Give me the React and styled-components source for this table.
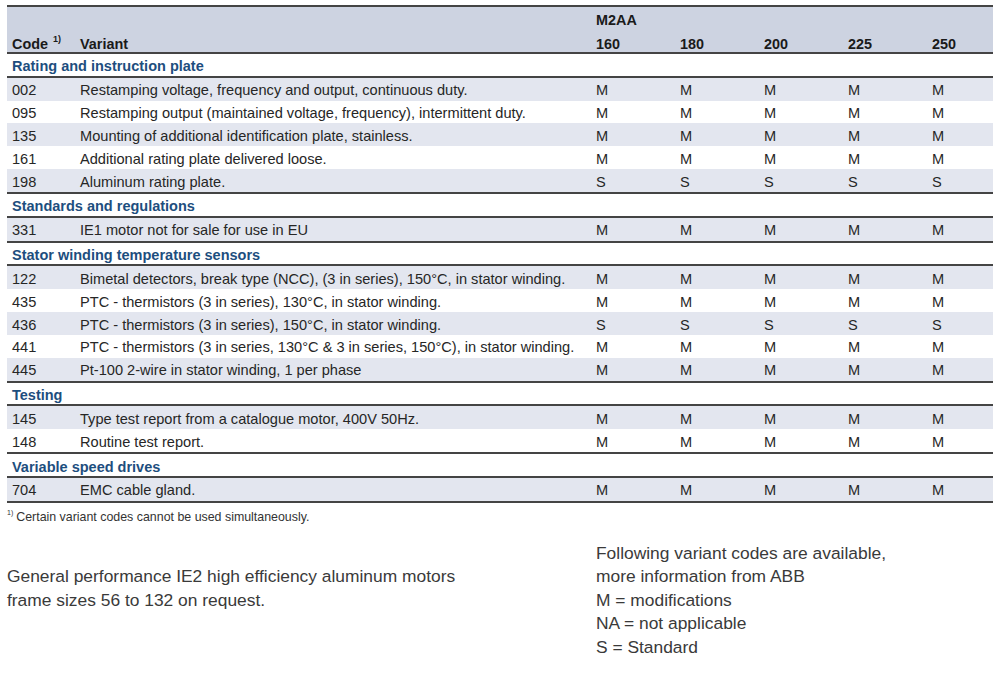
import React from "react";
import styled, { createGlobalStyle } from "styled-components";

const Global = createGlobalStyle`
  *, *::before, *::after { box-sizing: border-box; }
  html, body { margin: 0; padding: 0; background: #fff; }
  body { font-family: "Liberation Sans", Arial, Helvetica, sans-serif; color: #1e1e1e; }
`;

const Page = styled.div`
  width: 1000px;
  height: 679px;
  padding: 5px 7px 0 7px;
  overflow: hidden;
`;

const Table = styled.div`
  width: 986px;
  border-top: 2px solid #444;
`;

const COLS = "73px 516px 84px 84px 84px 84px 1fr";

const HeadBlock = styled.div`
  background: #cdd3e1;
  border-bottom: 2px solid #444;
  height: 47px;
  display: grid;
  grid-template-columns: ${COLS};
  grid-template-rows: 22px 23px;
  font-weight: bold;
  font-size: 14.4px;
  color: #1a1a1a;
`;

const HeadCell = styled.div`
  display: flex;
  align-items: ${(p) => (p.$row === 2 ? "flex-end" : "center")};
  padding-left: ${(p) => (p.$first ? "5px" : "0")};
  grid-column: ${(p) => p.$col || "auto"};
  grid-row: ${(p) => p.$row || "auto"};
  padding-top: ${(p) => (p.$row === 1 ? "3px" : "0")};
`;

const Sup = styled.span`
  font-size: 9px;
  font-weight: bold;
  margin-left: 5px;
  align-self: flex-start;
  margin-top: 5px;
`;

const SectionTitle = styled.div`
  height: 23.8px;
  display: flex;
  align-items: center;
  padding-left: 5px;
  padding-top: 3px;
  font-size: 14.5px;
  font-weight: bold;
  color: #1d4e7e;
  border-bottom: 2px solid #444;
`;

const Rows = styled.div`
  border-bottom: 2px solid #444;
`;

const Row = styled.div`
  display: grid;
  grid-template-columns: ${COLS};
  height: 22.85px;
  padding-top: 2px;
  align-items: center;
  background: ${(p) => (p.$shade ? "#e3e6ef" : "#fff")};
  font-size: 14.6px;
  color: #262626;
`;

const Cell = styled.div`
  padding-left: ${(p) => (p.$first ? "5px" : "0")};
  white-space: nowrap;
`;

const Footnote = styled.div`
  font-size: 12.4px;
  color: #333;
  margin-top: 7px;
  display: flex;
  align-items: flex-start;
`;

const FootSup = styled.span`
  font-size: 7px;
  margin-right: 3px;
  position: relative;
  top: -1px;
`;

const Bottom = styled.div`
  display: grid;
  grid-template-columns: 589px 1fr;
  margin-top: 18px;
  font-size: 17.4px;
  line-height: 23.5px;
  color: #3a3a3a;
`;

const Para = styled.div`
  padding-top: ${(p) => (p.$offset ? "23.5px" : "0")};
`;

const sections = [
  {
    title: "Rating and instruction plate",
    rows: [
      ["002", "Restamping voltage, frequency and output, continuous duty.", "M"],
      ["095", "Restamping output (maintained voltage, frequency), intermittent duty.", "M"],
      ["135", "Mounting of additional identification plate, stainless.", "M"],
      ["161", "Additional rating plate delivered loose.", "M"],
      ["198", "Aluminum rating plate.", "S"],
    ],
  },
  {
    title: "Standards and regulations",
    rows: [["331", "IE1 motor not for sale for use in EU", "M"]],
  },
  {
    title: "Stator winding temperature sensors",
    rows: [
      ["122", "Bimetal detectors, break type (NCC), (3 in series), 150°C, in stator winding.", "M"],
      ["435", "PTC - thermistors (3 in series), 130°C, in stator winding.", "M"],
      ["436", "PTC - thermistors (3 in series), 150°C, in stator winding.", "S"],
      ["441", "PTC - thermistors (3 in series, 130°C & 3 in series, 150°C), in stator winding.", "M"],
      ["445", "Pt-100 2-wire in stator winding, 1 per phase", "M"],
    ],
  },
  {
    title: "Testing",
    rows: [
      ["145", "Type test report from a catalogue motor, 400V 50Hz.", "M"],
      ["148", "Routine test report.", "M"],
    ],
  },
  {
    title: "Variable speed drives",
    rows: [["704", "EMC cable gland.", "M"]],
  },
];

const sizes = ["160", "180", "200", "225", "250"];

export default function App() {
  return (
    <Page>
      <Global />
      <Table>
        <HeadBlock>
          <HeadCell $col="3" $row={1}>M2AA</HeadCell>
          <HeadCell $first $col="1" $row={2}>
            Code<Sup>1)</Sup>
          </HeadCell>
          <HeadCell $col="2" $row={2}>Variant</HeadCell>
          {sizes.map((s, i) => (
            <HeadCell key={s} $col={String(3 + i)} $row={2}>
              {s}
            </HeadCell>
          ))}
        </HeadBlock>
        {sections.map((sec) => (
          <div key={sec.title}>
            <SectionTitle>{sec.title}</SectionTitle>
            <Rows>
              {sec.rows.map(([code, text, v], i) => (
                <Row key={code} $shade={i % 2 === 0}>
                  <Cell $first>{code}</Cell>
                  <Cell>{text}</Cell>
                  {sizes.map((s) => (
                    <Cell key={s}>{v}</Cell>
                  ))}
                </Row>
              ))}
            </Rows>
          </div>
        ))}
      </Table>
      <Footnote>
        <FootSup>1)</FootSup>
        Certain variant codes cannot be used simultaneously.
      </Footnote>
      <Bottom>
        <Para $offset>
          General performance IE2 high efficiency aluminum motors
          <br />
          frame sizes 56 to 132 on request.
        </Para>
        <Para>
          Following variant codes are available,
          <br />
          more information from ABB
          <br />
          M = modifications
          <br />
          NA = not applicable
          <br />
          S = Standard
        </Para>
      </Bottom>
    </Page>
  );
}
